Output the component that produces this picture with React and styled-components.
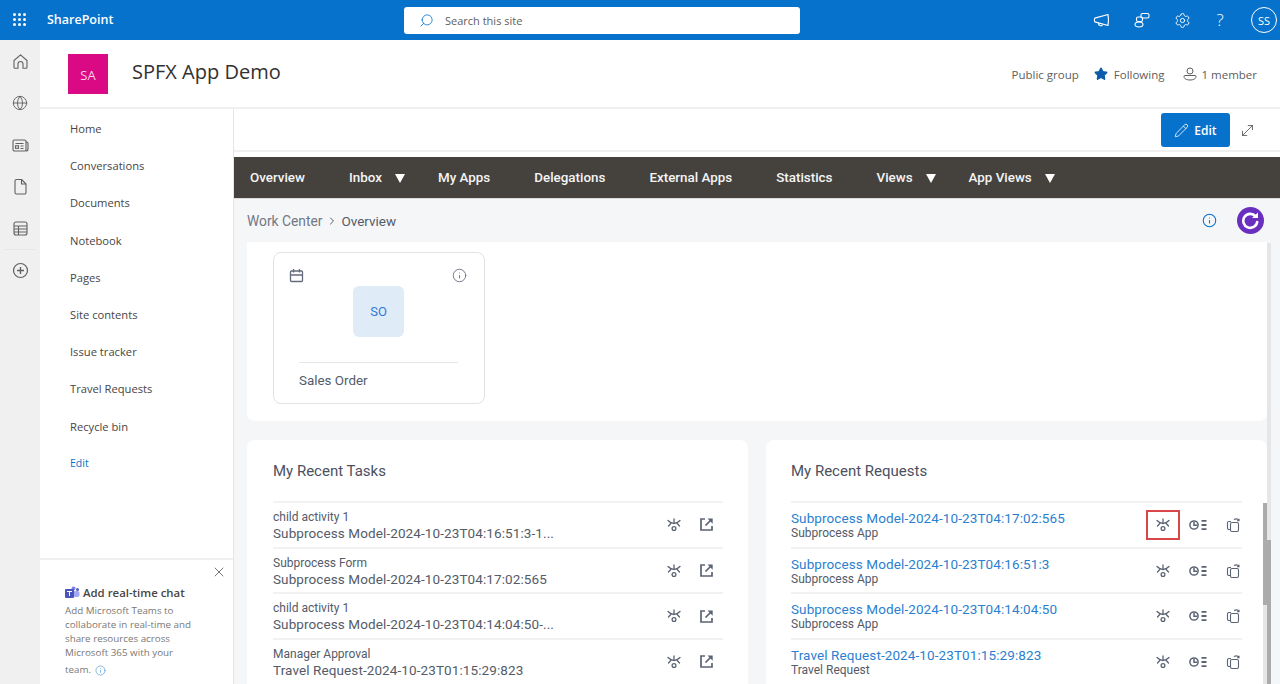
import styled, { createGlobalStyle } from "styled-components";
import { Globe, Search, Settings, Star, Pencil, MoveDiagonal, Info, ChevronRight, X } from "lucide-react";

const GlobalStyle = createGlobalStyle`
  html, body { margin: 0; padding: 0; height: 684px; overflow: hidden; background: #fff; }
  *, *::before, *::after { box-sizing: border-box; }
  body { font-family: "Open Sans", "Liberation Sans", sans-serif; }
`;

const Page = styled.div`
  width: 1280px;
  height: 684px;
  display: flex;
  flex-direction: column;
  overflow: hidden;
`;

const SuiteBar = styled.header`
  height: 40px;
  flex: none;
  background: #0672cb;
  display: flex;
  align-items: center;
  color: #fff;
  position: relative;
`;

const Waffle = styled.div`
  width: 40px;
  height: 40px;
  display: grid;
  grid-template-columns: repeat(3, 3px);
  grid-auto-rows: 3px;
  gap: 2px;
  padding: 13px 0 0 13px;
  span { background: #fff; border-radius: 50%; }
`;

const Brand = styled.div`
  font-size: 12.5px;
  font-weight: 600;
  margin-left: 7px;
  margin-top: -1px;
`;

const SearchBox = styled.div`
  position: absolute;
  left: 404px;
  top: 7px;
  width: 396px;
  height: 27px;
  background: #fff;
  border-radius: 3px;
  display: flex;
  align-items: center;
  padding-left: 15px;
  gap: 11px;
  color: #0672cb;
  font-size: 11px;
  span { color: #605e5c; }
`;

const SuiteActions = styled.div`
  margin-left: auto;
  display: flex;
  align-items: center;
  gap: 23px;
  padding-right: 3px;
`;

const HelpGlyph = styled.span`
  font-size: 17px;
  font-weight: 300;
  width: 12px;
  margin-right: 3px;
  text-align: center;
  line-height: 20px;
`;

const Avatar = styled.div`
  width: 26px;
  height: 26px;
  border: 1px solid #fff;
  border-radius: 50%;
  font-size: 11px;
  display: flex;
  align-items: center;
  justify-content: center;
  margin-left: -1px;
`;

const Body = styled.div`
  flex: 1;
  display: flex;
  min-height: 0;
`;

const Rail = styled.nav`
  width: 40px;
  flex: none;
  background: #f0f0f0;
  display: flex;
  flex-direction: column;
  align-items: center;
  padding-top: 13px;
  color: #616161;
`;

const RailItem = styled.div`
  height: 41.8px;
  display: flex;
  justify-content: center;
  width: 100%;
  position: relative;
  ${(p) =>
    p.$divider &&
    `
    &::before {
      content: "";
      position: absolute;
      left: 4px;
      right: 4px;
      top: -13px;
      height: 1px;
      background: #e6e6e6;
    }
  `}
`;

const Site = styled.div`
  flex: 1;
  min-width: 0;
  display: flex;
  flex-direction: column;
`;

const SiteHeader = styled.div`
  height: 69px;
  flex: none;
  border-bottom: 2px solid #f0f0f0;
  display: flex;
  align-items: flex-start;
  padding: 14px 23px 0 28px;
`;

const SiteLogo = styled.div`
  width: 40px;
  height: 40px;
  background: #da0a84;
  color: #f9cfe6;
  font-size: 13px;
  display: flex;
  align-items: center;
  justify-content: center;
  padding-top: 2px;
`;

const SiteTitle = styled.h1`
  margin: 1px 0 0 24px;
  font-size: 20px;
  font-weight: 400;
  line-height: 34px;
  color: #323130;
`;

const SiteMeta = styled.div`
  margin-left: auto;
  display: flex;
  align-items: center;
  height: 40px;
  font-size: 11.5px;
  color: #605e5c;
`;

const MetaItem = styled.div`
  display: flex;
  align-items: center;
  gap: ${(p) => p.$gap || 0}px;
  margin-left: ${(p) => p.$left || 0}px;
  color: ${(p) => p.$color || "#605e5c"};
`;

const Columns = styled.div`
  flex: 1;
  min-height: 0;
  display: flex;
`;

const SideNav = styled.aside`
  width: 194px;
  flex: none;
  border-right: 1px solid #e6e6e6;
  display: flex;
  flex-direction: column;
`;

const NavList = styled.div`
  flex: 1;
  padding: 1px 0 0 30px;
`;

const NavLink = styled.div`
  height: 37.2px;
  display: flex;
  align-items: center;
  color: ${(p) => (p.$edit ? "#0672cb" : "#484644")};
  font-size: ${(p) => (p.$edit ? "10.5px" : "11.2px")};
`;

const ChatPromo = styled.div`
  height: 126px;
  flex: none;
  border-top: 2px solid #f0f0f0;
  padding: 25px 36px 0 25px;
  position: relative;
  font-size: 9.8px;
  line-height: 14px;
  color: #7a7876;
`;

const PromoClose = styled.div`
  position: absolute;
  right: 6px;
  top: 4px;
  color: #555;
`;

const PromoTitle = styled.div`
  display: flex;
  align-items: center;
  gap: 3px;
  font-size: 11.4px;
  font-weight: 600;
  color: #484644;
  line-height: 16px;
  margin-bottom: 3px;
  white-space: nowrap;
`;

const PromoFoot = styled.div`
  margin-top: 3px;
  display: flex;
  align-items: center;
  gap: 4px;
  color: #3a8ad6;
  span { color: #7a7876; }
`;

const Main = styled.main`
  flex: 1;
  min-width: 0;
  display: flex;
  flex-direction: column;
`;

const EditBar = styled.div`
  height: 43px;
  flex: none;
  border-bottom: 2px solid #f0f0f0;
  display: flex;
  justify-content: flex-end;
  align-items: flex-start;
  padding: 4px 24px 0 0;
  gap: 9px;
`;

const EditButton = styled.button`
  width: 69px;
  height: 34px;
  border: none;
  border-radius: 3px;
  background: #0672cb;
  color: #fff;
  font: 600 12px "Open Sans", sans-serif;
  display: flex;
  align-items: center;
  justify-content: center;
  gap: 5px;
`;

const ExpandIcon = styled.div`
  height: 34px;
  display: flex;
  align-items: center;
  color: #484644;
`;

const MenuBar = styled.div`
  margin-top: 5px;
  height: 41px;
  flex: none;
  background: #45423e;
  display: flex;
  align-items: center;
  padding-left: 16px;
  gap: 44px;
  font: 500 13.4px Roboto, sans-serif;
`;

const MenuItem = styled.div`
  display: flex;
  align-items: center;
  gap: 11px;
  white-space: nowrap;
  color: #f4f4f4;
  margin-right: ${(p) => (p.$caret ? "-11px" : "0")};
  &::after {
    content: "";
    display: ${(p) => (p.$caret ? "block" : "none")};
    border-left: 5px solid transparent;
    border-right: 5px solid transparent;
    border-top: 9px solid #fff;
    margin: 1px 0 0 2px;
  }
`;

const Canvas = styled.div`
  flex: 1;
  min-height: 0;
  background: #f5f6f8;
  border-top: 1px solid #ddd;
  overflow: hidden;
  position: relative;
`;

const Crumbs = styled.div`
  height: 43px;
  display: flex;
  align-items: center;
  padding: 0 16px 0 13px;
  font: 400 13.8px Roboto, sans-serif;
  color: #717886;
`;

const CrumbCurrent = styled.span`
  color: #545b69;
  display: flex;
  align-items: center;
  gap: 3px;
  margin-left: 4px;
  font-size: 13.5px;
`;

const CrumbTools = styled.div`
  margin-left: auto;
  display: flex;
  align-items: center;
  gap: 20px;
  color: #0672cb;
`;

const RefreshBadge = styled.div`
  width: 27px;
  height: 27px;
  border-radius: 50%;
  background: #6b2fc0;
  display: flex;
  align-items: center;
  justify-content: center;
`;

const AppsPanel = styled.section`
  margin: 0 13px;
  height: 179px;
  background: #fff;
  border-radius: 0 0 8px 8px;
  padding: 10px 0 0 26px;
`;

const AppCard = styled.div`
  width: 212px;
  height: 152px;
  border: 1px solid #e0e2e6;
  border-radius: 8px;
  padding: 15px 17px 0 15px;
  color: #646b7a;
`;

const CardTop = styled.div`
  display: flex;
  justify-content: space-between;
`;

const AppTile = styled.div`
  width: 51px;
  height: 51px;
  background: #dfebf6;
  border-radius: 6px;
  color: #2f7cd6;
  font: 400 13px Roboto, sans-serif;
  display: flex;
  align-items: center;
  justify-content: center;
  margin: 3px auto 0 64px;
`;

const CardFoot = styled.div`
  margin: 25px 9px 0 10px;
  border-top: 1px solid #e6e7ea;
  padding-top: 10px;
  font: 400 13.4px Roboto, sans-serif;
  color: #545b69;
`;

const PanelRow = styled.div`
  margin: 19px 13px 0;
  display: grid;
  grid-template-columns: 501px 501px;
  gap: 18px;
`;

const ListPanel = styled.section`
  background: #fff;
  border-radius: 8px;
  height: 300px;
  padding: 22px 25px 0 ${(p) => p.$left}px;
`;

const PanelTitle = styled.h2`
  margin: 0 0 20px;
  font: 400 15px Roboto, sans-serif;
  line-height: 19px;
  color: #4a5160;
`;

const Row = styled.div`
  height: 45.7px;
  border-top: 2px solid #f1f2f4;
  display: flex;
  align-items: center;
  justify-content: space-between;
`;

const RowText = styled.div`
  font-family: Roboto, sans-serif;
  display: flex;
  flex-direction: column;
  padding-top: 1px;
`;

const RowSmall = styled.div`
  font-size: 12px;
  line-height: 15px;
  color: #545b69;
`;

const RowLarge = styled.div`
  font-size: 13.5px;
  line-height: 16px;
  letter-spacing: 0.1px;
  color: ${(p) => (p.$link ? "#2b7fd0" : "#545b69")};
`;

const RowIcons = styled.div`
  display: flex;
  align-items: center;
  gap: ${(p) => p.$gap}px;
  margin-right: ${(p) => p.$right}px;
`;

const IconBox = styled.div`
  display: flex;
  align-items: center;
  justify-content: center;
  width: ${(p) => p.$width || 16}px;
  height: 16px;
  position: relative;
  ${(p) =>
    p.$flagged &&
    `
    &::after {
      content: "";
      position: absolute;
      left: -9px;
      top: -7px;
      width: 34px;
      height: 30px;
      border: 2px solid #d9464a;
    }
  `}
`;

const Scrollbar = styled.div`
  position: absolute;
  right: 9px;
  top: 44px;
  width: 4px;
  bottom: 0;
  background: #e6e6e6;
`;

const ScrollThumb = styled.div`
  position: absolute;
  left: ${(p) => p.$left}px;
  top: ${(p) => p.$top}px;
  width: 4px;
  height: ${(p) => p.$height}px;
  background: ${(p) => p.$color || "#ababab"};
`;

function RailHome() {
  return (
    <svg width="17" height="17" viewBox="0 0 17 17" fill="none" stroke="currentColor" strokeWidth="1.1" strokeLinejoin="round">
      <path d="M8.5 1.8 2 7.5v6.8a1 1 0 0 0 1 1h3V11a2.5 2.5 0 0 1 5 0v4.3h3a1 1 0 0 0 1-1V7.5z" />
    </svg>
  );
}

function RailGlobe() {
  return <Globe size={16} strokeWidth={1.4} />;
}

function RailNews() {
  return (
    <svg width="17" height="17" viewBox="0 0 17 17" fill="none" stroke="currentColor" strokeWidth="1.1">
      <path d="M1 4.5A1.5 1.5 0 0 1 2.5 3h10A1.5 1.5 0 0 1 14 4.5v8a1.5 1.5 0 0 1-1.5 1.5h-10A1.5 1.5 0 0 1 1 12.5z" />
      <path d="M14 5h.5A1.5 1.5 0 0 1 16 6.5V12a2 2 0 0 1-2 2" />
      <path d="M3.5 6.5h8M8.5 9h3M8.5 11.5h3" />
      <rect x="3.5" y="8.8" width="3" height="2.5" />
    </svg>
  );
}

function RailFile() {
  return (
    <svg width="17" height="17" viewBox="0 0 17 17" fill="none" stroke="currentColor" strokeWidth="1.1" strokeLinejoin="round">
      <path d="M3 3a1.5 1.5 0 0 1 1.5-1.5H9.5L14 6v8.500a1.5 1.5 0 0 1-1.5 1.5h-8A1.5 1.5 0 0 1 3 14.5z" />
      <path d="M9.5 1.5V6H14" />
    </svg>
  );
}

function RailTable() {
  return (
    <svg width="17" height="17" viewBox="0 0 17 17" fill="none" stroke="currentColor" strokeWidth="1.1">
      <rect x="2" y="2" width="13" height="13" rx="2" />
      <path d="M2 6h13M2 9h13M2 12h13M6.5 6v9" />
    </svg>
  );
}

function RailPlus() {
  return (
    <svg width="17" height="17" viewBox="0 0 17 17" fill="none" stroke="currentColor" strokeWidth="1.2">
      <circle cx="8.5" cy="8.5" r="7" />
      <path d="M8.5 5v7M5 8.5h7" strokeWidth="1.4" />
    </svg>
  );
}

function Announce() {
  return (
    <svg width="17" height="17" viewBox="0 0 17 17" fill="none" stroke="#fff" strokeWidth="1.2" strokeLinejoin="round">
      <path d="M1.8 6.2 15 2.5q1 5.5 0 11L1.8 9.800q-1-1.800 0-3.600z" />
      <path d="M5.5 11c-.2 2.5 2.5 3.5 4 2" />
    </svg>
  );
}

function Convos() {
  return (
    <svg width="18" height="18" viewBox="0 0 18 18" fill="none" stroke="#fff" strokeWidth="1.1">
      <rect x="8" y="2.5" width="8" height="4.5" rx="1.5" />
      <rect x="3.5" y="6" width="6" height="4.5" rx="1.5" />
      <ellipse cx="6" cy="13.5" rx="4" ry="2.5" />
    </svg>
  );
}

function Member() {
  return (
    <svg width="14" height="14" viewBox="0 0 14 14" fill="none" stroke="#605e5c" strokeWidth="1">
      <circle cx="7" cy="4" r="3" />
      <path d="M2 8.5h10a1 1 0 0 1 1 1c0 2.5-3 3.5-6 3.5s-6-1-6-3.5a1 1 0 0 1 1-1z" />
    </svg>
  );
}

function Refresh() {
  return (
    <svg width="19" height="19" viewBox="0 0 19 19" fill="none">
      <path d="M14.5 5.2A7 7 0 1 0 16.2 11" stroke="#fff" strokeWidth="2.6" strokeLinecap="round" />
      <path d="M11 7h6V1.5z" fill="#fff" />
    </svg>
  );
}

function Teams() {
  return (
    <svg width="15" height="14" viewBox="0 0 15 14">
      <circle cx="8.5" cy="2.5" r="2" fill="#7b83eb" />
      <circle cx="12.5" cy="3.5" r="1.5" fill="#5059c9" />
      <rect x="8" y="5" width="6.5" height="6" rx="2" fill="#7b83eb" opacity=".7" />
      <rect x="0" y="3" width="9" height="9" rx="1" fill="#4b53bc" />
      <path d="M2 5h5v1H5v4H4V6H2z" fill="#fff" />
    </svg>
  );
}

function Calendar() {
  return (
    <svg width="15" height="15" viewBox="0 0 15 15" fill="none" stroke="#646b7a" strokeWidth="1.3">
      <rect x="1.5" y="3" width="12" height="10.5" rx="1" />
      <path d="M1.5 7h12M4.5 1v3.5M10.5 1v3.5" />
    </svg>
  );
}

// eye with lashes over a small ring, used for the "view" action
function Watch() {
  return (
    <svg width="16" height="16" viewBox="0 0 16 16" fill="none" stroke="#5b6373" strokeWidth="1.3" strokeLinecap="round">
      <path d="M2 3.5Q8 9.500 14 3.5" />
      <path d="M2.5 9 5 6.300M13.5 9 11 6.300M8 2v4" />
      <circle cx="8" cy="11.5" r="1.9" />
    </svg>
  );
}

function OpenOut() {
  return (
    <svg width="15" height="15" viewBox="0 0 15 15" fill="none" stroke="#5b6373" strokeWidth="1.7">
      <path d="M6 2H2v11h11V9" />
      <path d="M6.5 8.5 12.5 2.5" />
      <path d="M8.5 1.5h5.2v5.2z" fill="#5b6373" stroke="none" />
    </svg>
  );
}

function History() {
  return (
    <svg width="18" height="12" viewBox="0 0 18 12" fill="none" stroke="#5b6373" strokeWidth="1.5">
      <circle cx="5" cy="6" r="4.1" />
      <path d="M5 3v3.300h3.200" />
      <path d="M12.5 1.800h5M12.500 6h5M12.500 10.200h5" strokeWidth="1.8" />
    </svg>
  );
}

function Copies() {
  return (
    <svg width="15" height="16" viewBox="0 0 15 16" fill="none" stroke="#5b6373" strokeWidth="1.1">
      <rect x="4.5" y="5.5" width="8" height="9" rx="1.5" />
      <path d="M4.5 12.500H3A1.500 1.500 0 0 1 1.500 11V6A1.500 1.500 0 0 1 3 4.500h2" />
      <path d="M8 2.500c2 -1 4 -.5 5 1M13 1.800v2h-2" />
    </svg>
  );
}

const railIcons = [RailHome, RailGlobe, RailNews, RailFile, RailTable, RailPlus];
const navLinks = ["Home", "Conversations", "Documents", "Notebook", "Pages", "Site contents", "Issue tracker", "Travel Requests", "Recycle bin"];
const menu = [
  ["Overview"],
  ["Inbox", true],
  ["My Apps"],
  ["Delegations"],
  ["External Apps"],
  ["Statistics"],
  ["Views", true],
  ["App Views", true],
];
const tasks = [
  ["child activity 1", "Subprocess Model-2024-10-23T04:16:51:3-1..."],
  ["Subprocess Form", "Subprocess Model-2024-10-23T04:17:02:565"],
  ["child activity 1", "Subprocess Model-2024-10-23T04:14:04:50-..."],
  ["Manager Approval", "Travel Request-2024-10-23T01:15:29:823"],
];
const requests = [
  ["Subprocess Model-2024-10-23T04:17:02:565", "Subprocess App"],
  ["Subprocess Model-2024-10-23T04:16:51:3", "Subprocess App"],
  ["Subprocess Model-2024-10-23T04:14:04:50", "Subprocess App"],
  ["Travel Request-2024-10-23T01:15:29:823", "Travel Request"],
];

export default function App() {
  return (
    <Page>
      <GlobalStyle />
      <SuiteBar>
        <Waffle>
          {Array.from({ length: 9 }).map((_, i) => (
            <span key={i} />
          ))}
        </Waffle>
        <Brand>SharePoint</Brand>
        <SearchBox>
          <Search size={15} strokeWidth={1.3} style={{ transform: "scaleX(-1)" }} />
          <span>Search this site</span>
        </SearchBox>
        <SuiteActions>
          <Announce />
          <Convos />
          <Settings size={17} strokeWidth={1.3} />
          <HelpGlyph>?</HelpGlyph>
          <Avatar>SS</Avatar>
        </SuiteActions>
      </SuiteBar>
      <Body>
        <Rail>
          {railIcons.map((Icon, i) => (
            <RailItem key={i} $divider={i === 5}>
              <Icon />
            </RailItem>
          ))}
        </Rail>
        <Site>
          <SiteHeader>
            <SiteLogo>SA</SiteLogo>
            <SiteTitle>SPFX App Demo</SiteTitle>
            <SiteMeta>
              <MetaItem>Public group</MetaItem>
              <MetaItem $left={15} $gap={6}>
                <Star size={14} fill="#0b5cab" color="#0b5cab" />
                Following
              </MetaItem>
              <MetaItem $left={19} $gap={4}>
                <Member />
                1 member
              </MetaItem>
            </SiteMeta>
          </SiteHeader>
          <Columns>
            <SideNav>
              <NavList>
                {navLinks.map((l) => (
                  <NavLink key={l}>{l}</NavLink>
                ))}
                <NavLink $edit>Edit</NavLink>
              </NavList>
              <ChatPromo>
                <PromoClose>
                  <X size={16} strokeWidth={1.2} />
                </PromoClose>
                <PromoTitle>
                  <Teams />
                  Add real-time chat
                </PromoTitle>
                Add Microsoft Teams to collaborate in real-time and share resources across Microsoft 365 with your
                <PromoFoot>
                  <span>team.</span>
                  <Info size={11} strokeWidth={1.3} />
                </PromoFoot>
              </ChatPromo>
            </SideNav>
            <Main>
              <EditBar>
                <EditButton>
                  <Pencil size={15} strokeWidth={1.3} />
                  Edit
                </EditButton>
                <ExpandIcon>
                  <MoveDiagonal size={17} strokeWidth={1.1} />
                </ExpandIcon>
              </EditBar>
              <MenuBar>
                {menu.map(([label, caret]) => (
                  <MenuItem key={label} $caret={caret}>
                    {label}
                  </MenuItem>
                ))}
              </MenuBar>
              <Canvas>
                <Crumbs>
                  Work Center
                  <CrumbCurrent>
                    <ChevronRight size={12} strokeWidth={2} />
                    Overview
                  </CrumbCurrent>
                  <CrumbTools>
                    <Info size={15} strokeWidth={1.7} />
                    <RefreshBadge>
                      <Refresh />
                    </RefreshBadge>
                  </CrumbTools>
                </Crumbs>
                <AppsPanel>
                  <AppCard>
                    <CardTop>
                      <Calendar />
                      <Info size={15} strokeWidth={1.4} />
                    </CardTop>
                    <AppTile>SO</AppTile>
                    <CardFoot>Sales Order</CardFoot>
                  </AppCard>
                </AppsPanel>
                <PanelRow>
                  <ListPanel $left={26}>
                    <PanelTitle>My Recent Tasks</PanelTitle>
                    {tasks.map(([a, b]) => (
                      <Row key={b}>
                        <RowText>
                          <RowSmall>{a}</RowSmall>
                          <RowLarge>{b}</RowLarge>
                        </RowText>
                        <RowIcons $gap={16} $right={9}>
                          <IconBox>
                            <Watch />
                          </IconBox>
                          <IconBox>
                            <OpenOut />
                          </IconBox>
                        </RowIcons>
                      </Row>
                    ))}
                  </ListPanel>
                  <ListPanel $left={25}>
                    <PanelTitle>My Recent Requests</PanelTitle>
                    {requests.map(([a, b], i) => (
                      <Row key={a}>
                        <RowText>
                          <RowLarge $link>{a}</RowLarge>
                          <RowSmall>{b}</RowSmall>
                        </RowText>
                        <RowIcons $gap={17} $right={1}>
                          <IconBox $flagged={i === 0}>
                            <Watch />
                          </IconBox>
                          <IconBox $width={20}>
                            <History />
                          </IconBox>
                          <IconBox>
                            <Copies />
                          </IconBox>
                        </RowIcons>
                      </Row>
                    ))}
                  </ListPanel>
                </PanelRow>
                <Scrollbar>
                  <ScrollThumb $left={-4} $top={362} $height={90} $color="#e6e6e6" />
                  <ScrollThumb $left={-4} $top={260} $height={102} />
                  <ScrollThumb $left={0} $top={297} $height={150} />
                </Scrollbar>
              </Canvas>
            </Main>
          </Columns>
        </Site>
      </Body>
    </Page>
  );
}
